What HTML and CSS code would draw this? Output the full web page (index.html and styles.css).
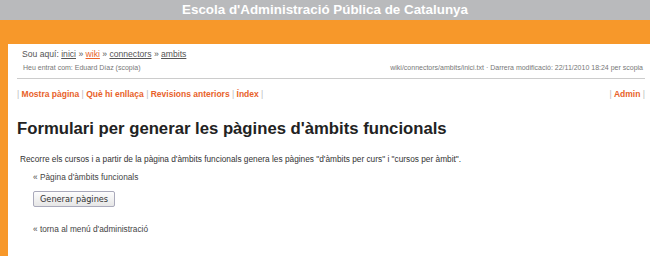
FILE: index.html
```html
<!DOCTYPE html>
<html lang="ca">
<head>
    <meta charset="UTF-8">
    <title>Formulari per generar les pàgines d'àmbits funcionals</title>
    <link rel="stylesheet" href="styles.css">
</head>
<body>
    <header class="site-title">Escola d'Administració Pública de Catalunya</header>
    <div class="orange-band"></div>

    <div class="page">
        <div class="crumbs">
            Sou aquí: <a href="#">inici</a> » <a href="#" class="wiki">wiki</a> » <a href="#">connectors</a> » <a href="#">ambits</a>
        </div>
        <div class="meta">
            <span>Heu entrat com: Eduard Díaz (scopia)</span>
            <span>wiki/connectors/ambits/inici.txt · Darrera modificació: 22/11/2010 18:24 per scopia</span>
        </div>

        <!-- page actions -->
        <nav class="actions">
            <div>
                | <a href="#">Mostra pàgina</a> | <a href="#">Què hi enllaça</a> | <a href="#">Revisions anteriors</a> | <a href="#">Índex</a> |
            </div>
            <div>| <a href="#">Admin</a> |</div>
        </nav>

        <h1>Formulari per generar les pàgines d'àmbits funcionals</h1>

        <p class="intro">Recorre els cursos i a partir de la pàgina d'àmbits funcionals genera les pàgines "d'àmbits per curs" i "cursos per àmbit".</p>

        <div class="block">
            <p class="back">« Pàgina d'àmbits funcionals</p>
            <button class="btn">Generar pàgines</button>
            <p class="back torna">« torna al menú d'administració</p>
        </div>
    </div>
</body>
</html>
```

FILE: styles.css
```css
/* General styling */
body {
    margin: 0;
    font-family: "Liberation Sans", Arial, sans-serif;
    color: #333;
    background-color: #fff;
}

.site-title {
    background-color: #b9babc;
    color: #fff;
    font-weight: bold;
    font-size: 13.4px;
    height: 20px;
    line-height: 20px;
    text-align: center;
}

.orange-band {
    background-color: #f7982a;
    height: 24px;
}

.page {
    border-left: 8px solid #f7982a;
    padding: 0 5px 0 9px;
    min-height: 212px;
}

.crumbs {
    font-size: 8.6px;
    color: #555;
    padding: 5px 0 0 5px;
    height: 12px;
}

.crumbs a {
    color: #555;
}

.crumbs a.wiki {
    color: #e8622a;
}

.meta {
    display: flex;
    justify-content: space-between;
    font-size: 7px;
    color: #777;
    padding: 3px 2px 0 6px;
    height: 14px;
    border-bottom: 1px solid #ccc;
}

.actions {
    display: flex;
    justify-content: space-between;
    font-size: 8.5px;
    color: #bbb;
    padding: 10px 0 0 0;
}

.actions a {
    color: #e8622a;
    font-weight: bold;
    text-decoration: none;
}

h1 {
    font-size: 16.7px;
    color: #222;
    margin: 20px 0 0 0;
}

.intro {
    font-size: 8.3px;
    margin: 15px 0 0 3px;
}

.block {
    padding-left: 16px;
}

.back {
    font-size: 8.3px;
    color: #444;
    margin: 8px 0 0 0;
}

.btn {
    font-family: "DejaVu Sans", sans-serif;
    font-size: 8.2px;
    color: #333;
    background: linear-gradient(#fdfdfd, #e6e6e6);
    border: 1px solid #aab;
    border-radius: 2px;
    padding: 2px 6px;
    margin-top: 9px;
}

.back.torna {
    margin-top: 17px;
}
```
